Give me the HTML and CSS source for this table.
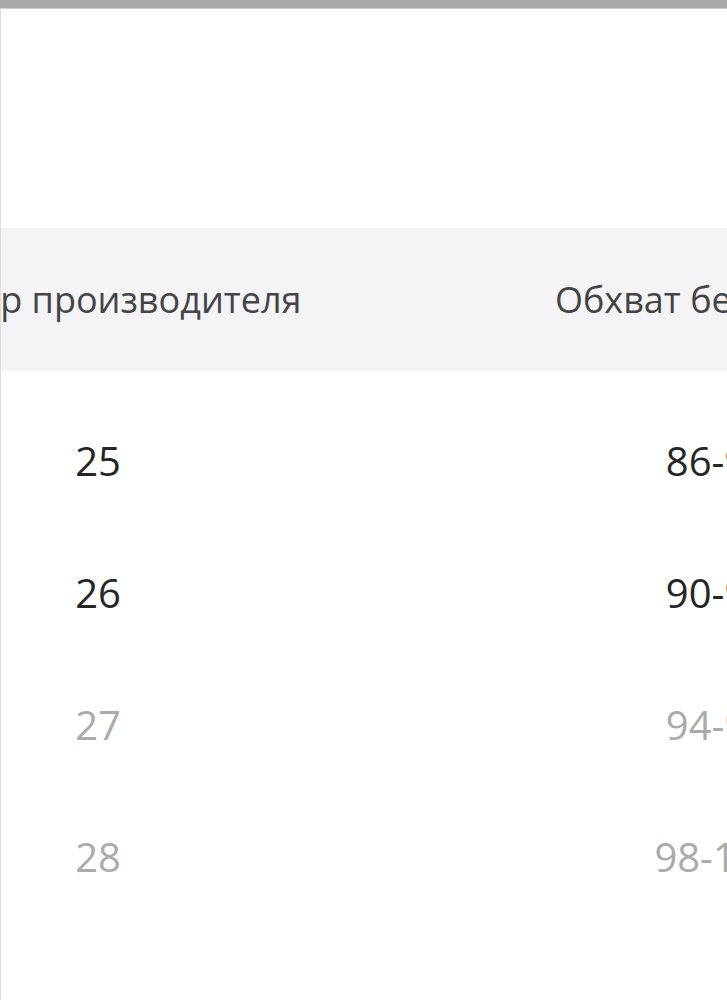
FILE: index.html
```html
<!DOCTYPE html>
<html lang="ru">
<head>
<meta charset="utf-8">
<title>Таблица размеров</title>
<link rel="stylesheet" href="styles.css">
</head>
<body>
<div class="frame">
  <div class="topbar"></div>
  <div class="panel">
    <div class="table">
      <div class="row head">
        <div class="cell">Размер производителя</div>
        <div class="cell wide">Обхват бедер, см</div>
      </div>
      <div class="body">
        <div class="row">
          <div class="cell">25</div>
          <div class="cell">86-90</div>
        </div>
        <div class="row">
          <div class="cell">26</div>
          <div class="cell">90-94</div>
        </div>
        <div class="row off">
          <div class="cell">27</div>
          <div class="cell">94-98</div>
        </div>
        <div class="row off">
          <div class="cell">28</div>
          <div class="cell">98-102</div>
        </div>
      </div>
    </div>
  </div>
</div>
</body>
</html>
```

FILE: styles.css
```css
html, body {
  margin: 0;
  padding: 0;
  background: #ffffff;
}

body {
  font-family: "Open Sans", "Noto Sans", sans-serif;
  overflow: hidden;
  width: 727px;
  height: 1000px;
}

.frame {
  display: flex;
  flex-direction: column;
  height: 1000px;
}

.topbar {
  height: 8px;
  background: #a9a9a9;
  border-bottom: 1px solid #cfcfcf;
  flex: none;
}

.panel {
  flex: 1;
  border-left: 1px solid #dcdcdc;
  overflow: hidden;
  padding-top: 219px;
}

.table {
  margin-left: -213px;
  width: 1240px;
  display: flex;
  flex-direction: column;
}

.row {
  display: grid;
  grid-template-columns: 620px 620px;
  align-items: center;
  height: 132px;
}

.cell {
  text-align: center;
  white-space: nowrap;
}

.head {
  height: 143px;
  background: #f4f4f7;
  color: #444444;
  font-size: 36px;
}

.head .wide {
  padding-right: 24px;
}

.body {
  display: flex;
  flex-direction: column;
  padding-top: 23px;
  color: #262626;
  font-size: 40px;
}

.row.off {
  color: #ababab;
}
```
